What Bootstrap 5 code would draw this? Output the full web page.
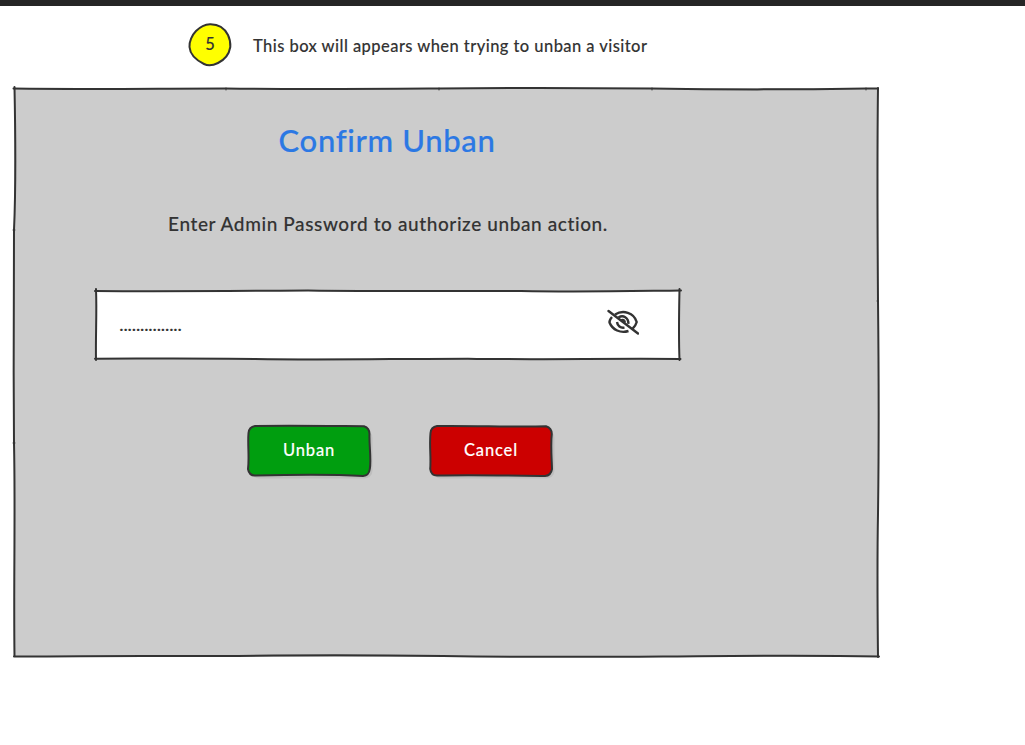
<!DOCTYPE html>
<html lang="en">
<head>
<meta charset="utf-8">
<meta name="viewport" content="width=device-width, initial-scale=1">
<title>Confirm Unban</title>
<link href="https://cdn.jsdelivr.net/npm/bootstrap@5.3.0/dist/css/bootstrap.min.css" rel="stylesheet">
<style>
body { font-family: Lato, "Open Sans", sans-serif; font-weight: 500; color: #333; background: #fff; overflow: hidden; -webkit-text-stroke: .12px currentColor; }
.topbar { height: 6px; background: #262626; }
.sketch { inset: 0; width: 100%; height: 100%; overflow: visible; pointer-events: none; }
.ink { stroke: #333; stroke-width: 2; stroke-linecap: round; stroke-linejoin: round; }
.note { height: 81px; padding: 17px 0 0 188px; gap: 21px; }
.step { width: 44px; height: 44px; font-size: 16.5px; line-height: 42px; }
.note-text { font-size: 16.5px; line-height: 24px; margin-top: 11px; letter-spacing: .44px; }
.panel { width: 867px; height: 571px; margin-left: 13px; padding-left: 82px; }
.dialog-col { width: 586px; }
.heading { font-size: 31px; line-height: 40px; color: #2b78e4; margin: 33px 0 0; padding-right: 2px; font-weight: 500; letter-spacing: .65px; -webkit-text-stroke: .2px currentColor; }
.prompt { font-size: 19px; line-height: 28px; margin: 50px 0 0; letter-spacing: .6px; }
.password { height: 71px; margin-top: 51px; padding: 0 42px 0 24.5px; }
.password .form-control { font-family: inherit; font-size: 16px; font-weight: 700; letter-spacing: .36px; color: #333; line-height: 24px; padding: 0; }
.eye { width: 32px; height: 26px; margin-top: -6px; }
.actions { margin-top: 65px; gap: 58px; padding-left: 152px; }
.sketch-btn { width: 124px; height: 52px; font-size: 16.5px; line-height: 24px; color: #fff; border: 0; padding: 0 0 2px; letter-spacing: .85px; font-weight: 500; -webkit-text-stroke: .12px currentColor; }
.sketch-btn:hover { color: #fff; }
</style>
</head>
<body>
<div class="topbar"></div>
<header class="note d-flex align-items-start">
  <div class="step position-relative text-center">
    <svg class="sketch position-absolute" viewBox="0 0 44 44"><path class="ink" fill="#ff0" d="M22 1.200C31 1 37 6 40 12C42 16 42.500 20 42.300 24C41 32 36 37 30 40C25 42.500 20 43 16 41C8 37 2 31 1.500 24C1 19 4 12 8 8C12 4 16 1.500 22 1.200Z"/></svg>
    <span class="position-relative">5</span>
  </div>
  <div class="note-text text-nowrap">This box will appears when trying to unban a visitor</div>
</header>
<main class="panel position-relative">
  <svg class="sketch position-absolute" viewBox="0 0 867 571">
    <path fill="#ccc" d="M1 1H865V570H1Z"/>
    <g class="ink" fill="none">
      <path d="M.5 1.500C75 2.500 145 1.500 213 1.500C285 2.500 350 2 426 1.500C500 .5 570 .8 639 1.500C710 2.700 790 2.500 853 1.500H865"/>
      <path d="M865 1C864 75 864.500 145 865 214C865.800 285 866 355 865 427C864 480 864.500 520 865 570"/>
      <path d="M866 569.500C790 568 720 569 650 569.500C570 570 500 570 430 569C350 568 290 568 225 569C150 569 80 568.500 25 569.500H1"/>
      <path d="M1.500 0C2.500 50 3 100 1 143C.5 215 .5 285 1 356C2.500 425 .5 500 1.500 569"/>
      <path stroke-width="1" d="M213 1v2M426 1v2M639 1v2M853 1v2M0 143h2M0 356h2M864 214h1.500"/>
    </g>
  </svg>
  <div class="dialog-col position-relative d-flex flex-column">
    <h1 class="heading text-center">Confirm Unban</h1>
    <p class="prompt text-center text-nowrap">Enter Admin Password to authorize unban action.</p>
    <div class="password position-relative d-flex align-items-center justify-content-between">
      <svg class="sketch position-absolute" viewBox="0 0 586 71">
        <path fill="#fff" d="M1 2H584V69.500H1Z"/>
        <g class="ink" fill="none">
          <path d="M0 2C75 2.500 145 2 213 1.500C285 2.500 355 2 426 2C485 3.200 540 2 586 1.500"/>
          <path d="M584.500 0C584 25 583.500 45 584.500 71"/>
          <path d="M585.500 70C520 69.200 440 71 373 69.700C300 69.700 230 71.300 160 70C100 69.200 50 69.700 0 69.700"/>
          <path d="M1 0C2 25 .5 45 1 71"/>
        </g>
      </svg>
      <span class="form-control border-0 bg-transparent w-auto position-relative">...............</span>
      <svg class="eye position-relative" viewBox="0 0 32 26" fill="none" stroke="#333" stroke-width="2.400" stroke-linecap="butt">
        <path d="M8 5.500C16 .5 27 3.500 29.700 13C29 15.500 28 17.500 25.700 19.500"/>
        <path d="M5 8C2.800 10.500 2.300 12 2.500 13.500C5.500 21 13.500 24.500 21.500 22"/>
        <path d="M11.500 8.500C16 5.500 21.800 8.500 21.300 14.800"/>
        <path d="M10 13C10.500 17 13.500 19.300 17.500 18.600"/>
        <path d="M14.500 10.500C17 9.500 19 12 18 13.500Z" fill="#333" stroke-width="1.200"/>
        <path stroke-linecap="round" d="M1.500 2L31 24.500"/>
      </svg>
    </div>
    <div class="actions d-flex">
      <button class="btn sketch-btn position-relative" type="button">
        <svg class="sketch position-absolute" viewBox="0 0 124 52"><rect x="4" y="5" width="121.500" height="48.500" rx="8" fill="#bebebe"/><path class="ink" fill="#009e0f" d="M8 1C45 .5 85 1 117 1.200Q122.500 3 122.500 9C122 20 124.500 35 122.800 44Q122 50.500 116 51C85 49 45 49.500 8 50.500Q2 50.500 1 44C2.500 32 .5 20 1.500 8Q2 2 8 1Z"/></svg>
        <span class="position-relative">Unban</span>
      </button>
      <button class="btn sketch-btn position-relative" type="button">
        <svg class="sketch position-absolute" viewBox="0 0 124 52"><rect x="4" y="5" width="121.500" height="48.500" rx="8" fill="#bebebe"/><path class="ink" fill="#c00" d="M8 1C45 .5 85 2.200 117 1.200Q122.800 3 122.800 9C121.500 20 122.800 35 123 44Q122 50.500 116 51C85 50.500 45 49.800 8 50.500Q2 50.500 1.200 44C2.200 32 .2 20 1.500 8Q2 2 8 1Z"/></svg>
        <span class="position-relative">Cancel</span>
      </button>
    </div>
  </div>
</main>
<script src="https://cdn.jsdelivr.net/npm/bootstrap@5.3.0/dist/js/bootstrap.bundle.min.js"></script>
</body>
</html>
